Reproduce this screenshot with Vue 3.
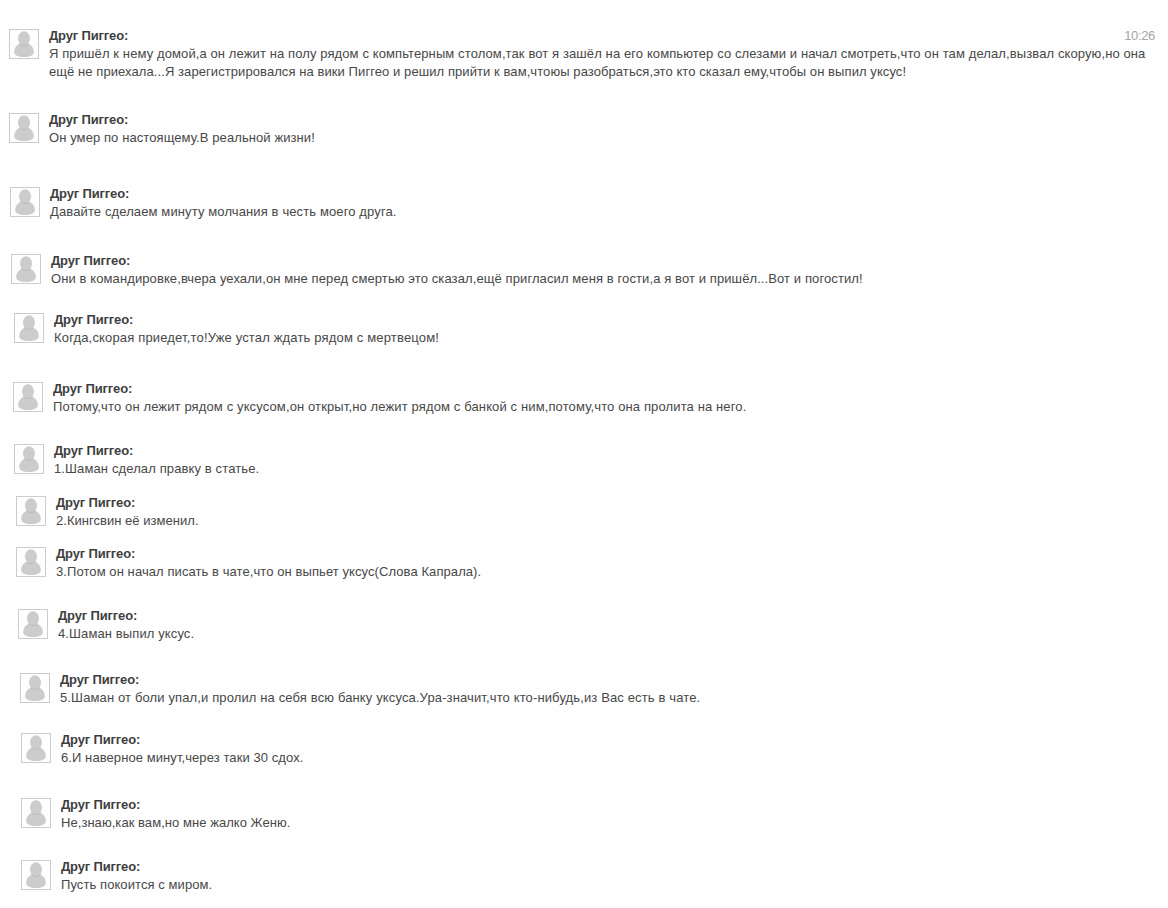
<template>
  <div class="chat">
    <div
      v-for="(msg, i) in messages"
      :key="i"
      class="message"
      :style="{ marginTop: msg.gap + 'px', marginLeft: msg.left + 'px' }"
    >
      <div class="avatar">
        <svg viewBox="0 0 28 28" width="28" height="28">
          <path class="body" d="M9 14C6 15.500 4.200 18.500 4.200 22C4.200 25.500 8 27 14 27C20 27 23.800 25.500 23.800 22C23.800 18.500 22 15.500 19 14Z" />
          <ellipse class="head" cx="14" cy="8.500" rx="6" ry="7.200" />
          <path class="chin" d="M9.500 13.500C11.500 16.200 16.500 16.200 18.500 13.500" />
        </svg>
      </div>
      <div class="content">
        <div class="top">
          <span class="name">Друг Пиггео:</span>
          <span v-if="msg.time" class="time">{{ msg.time }}</span>
        </div>
        <p
          v-for="(line, j) in msg.lines"
          :key="j"
          class="line"
          :style="{ letterSpacing: line.tracking + 'px' }"
        >
          {{ line.text }}
        </p>
      </div>
    </div>
  </div>
</template>

<script setup>
const messages = [
  {
    gap: 27,
    left: 9,
    time: '10:26',
    lines: [
      { tracking: 0.106, text: 'Я пришёл к нему домой,а он лежит на полу рядом с компьтерным столом,так вот я зашёл на его компьютер со слезами и начал смотреть,что он там делал,вызвал скорую,но она' },
      { tracking: 0.078, text: 'ещё не приехала...Я зарегистрировался на вики Пиггео и решил прийти к вам,чтоюы разобраться,это кто сказал ему,чтобы он выпил уксус!' }
    ]
  },
  { gap: 30, left: 9, lines: [{ tracking: 0.09, text: 'Он умер по настоящему.В реальной жизни!' }] },
  { gap: 38, left: 10, lines: [{ tracking: 0.12, text: 'Давайте сделаем минуту молчания в честь моего друга.' }] },
  { gap: 31, left: 11, lines: [{ tracking: 0.1, text: 'Они в командировке,вчера уехали,он мне перед смертью это сказал,ещё пригласил меня в гости,а я вот и пришёл...Вот и погостил!' }] },
  { gap: 23, left: 14, lines: [{ tracking: 0.165, text: 'Когда,скорая приедет,то!Уже устал ждать рядом с мертвецом!' }] },
  { gap: 33, left: 13, lines: [{ tracking: 0.127, text: 'Потому,что он лежит рядом с уксусом,он открыт,но лежит рядом с банкой с ним,потому,что она пролита на него.' }] },
  { gap: 26, left: 14, lines: [{ tracking: 0.12, text: '1.Шаман сделал правку в статье.' }] },
  { gap: 16, left: 16, lines: [{ tracking: 0.03, text: '2.Кингсвин её изменил.' }] },
  { gap: 15, left: 16, lines: [{ tracking: 0.08, text: '3.Потом он начал писать в чате,что он выпьет уксус(Слова Капрала).' }] },
  { gap: 26, left: 18, lines: [{ tracking: 0.11, text: '4.Шаман выпил уксус.' }] },
  { gap: 28, left: 20, lines: [{ tracking: 0.13, text: '5.Шаман от боли упал,и пролил на себя всю банку уксуса.Ура-значит,что кто-нибудь,из Вас есть в чате.' }] },
  { gap: 24, left: 21, lines: [{ tracking: 0.08, text: '6.И наверное минут,через таки 30 сдох.' }] },
  { gap: 29, left: 21, lines: [{ tracking: 0.05, text: 'Не,знаю,как вам,но мне жалко Женю.' }] },
  { gap: 26, left: 21, lines: [{ tracking: 0.08, text: 'Пусть покоится с миром.' }] }
]
</script>

<style>
body {
  background: #fefefe;
}
</style>

<style scoped>
.chat {
  display: flex;
  flex-direction: column;
  height: 908px;
  overflow: hidden;
  font-family: 'Liberation Sans', Arial, sans-serif;
  font-size: 13px;
  line-height: 18px;
  color: #484848;
}

.message {
  display: flex;
  gap: 10px;
  padding-right: 13px;
}

.avatar {
  flex: none;
  box-sizing: border-box;
  width: 30px;
  height: 30px;
  margin-top: 2px;
  border: 1px solid #ccc;
}

.avatar svg {
  display: block;
}

.head,
.body {
  fill: #ccc;
}

.chin {
  fill: none;
  stroke: #bbb;
  stroke-width: 1;
}

.content {
  flex: 1;
  min-width: 0;
}

.top {
  display: flex;
  justify-content: space-between;
}

.name {
  font-weight: bold;
  letter-spacing: -0.15px;
  color: #3e3e3e;
}

.time {
  color: #a5a5a5;
  letter-spacing: -0.35px;
}

.line {
  margin: 0;
  white-space: nowrap;
}
</style>
